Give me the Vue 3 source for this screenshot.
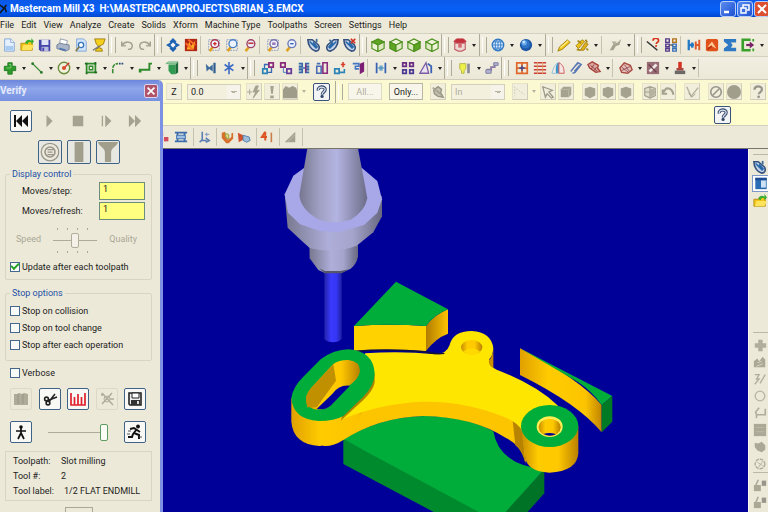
<script setup>
import { ref } from 'vue'

const movesStep = ref('1')
const movesRefresh = ref('1')
const coordinate = ref('0.0')
const quality = ref(50)
const speed = ref(100)
const updateEach = ref(true)
const verbose = ref(false)

const stops = ref([
  { label: 'Stop on collision', on: false },
  { label: 'Stop on tool change', on: false },
  { label: 'Stop after each operation', on: false },
])

const menus = ['File', 'Edit', 'View', 'Analyze', 'Create', 'Solids', 'Xform', 'Machine Type', 'Toolpaths', 'Screen', 'Settings', 'Help']

const lens = (extra, ring) =>
  `<path d="M3 15l4-5" stroke="#e0a020" stroke-width="3"/><circle cx="9" cy="6.500" r="4.500" fill="#eef4ff" stroke="${ring}" stroke-width="1.600"/>${extra}`
const frame = '<path d="M2 2h12v12H2z" fill="#f6f2dc" stroke="#7f8fc0" stroke-dasharray="2 1"/>'
const cube = (top, left, right) =>
  `<g stroke="#4c8f1c" stroke-width="1.300"><path d="M1 4.500L8 1l7 3.500L8 8z" fill="${top}"/><path d="M1 4.500L8 8v7.500L1 12z" fill="${left}"/><path d="M15 4.500L8 8v7.500l7-3.500z" fill="${right}"/></g>`
const solid = '<path d="M2 5l3-3h9v9l-3 3H2z" fill="#a5a28f"/><path d="M2 5h9v9M11 5l3-3" stroke="#bdbaa8" fill="none"/>'
const swoosh = (accent) =>
  `<path d="M1 2c0 6 4 12 9 13 4 0 5-4 3-7L6 2z" fill="#c5d4ea" stroke="#35507c" stroke-width="1.800"/><path d="M3 4l8 8M7 5l5 6" stroke="#2868a8" stroke-width="2"/>${accent}`
const question = (color) =>
  `<path d="M4 5.500C4 .5 12.500.5 12.500 5c0 3-3.500 3-3.500 5.500" fill="none" stroke="${color}" stroke-width="2.600"/><circle cx="8.700" cy="13.500" r="1.600" fill="${color}"/>`
const blocks = (a, b) =>
  `<path d="M2 9h5v5H2z" fill="none" stroke="${a}" stroke-width="2"/><path d="M9 2h5v5H9z" fill="none" stroke="${b}" stroke-width="2"/>`

const art = {
  file: '<path d="M3 1h7l4 4v10H3z" fill="#e6f1ff" stroke="#7da2d4"/><path d="M4 9h9v5H4z" fill="#a9cbf2"/><path d="M10 1v4h4" fill="#fff" stroke="#7da2d4"/>',
  open: '<path d="M1 6h5l1-2h7v10H1z" fill="#f2c518" stroke="#b38c10"/><path d="M4 8h12l-3 6H2z" fill="#ffe35a"/><path d="M6 6c1-4 4-5 7-3V0l3 4-3 3V5c-3-1-4 0-4 2z" fill="#3cae32"/>',
  save: '<path d="M1 2h13v13H3l-2-2z" fill="#4544a8"/><path d="M4 2h8v6H4z" fill="#dfe3f5"/><path d="M4 10h8v5H4z" fill="#b8bddf"/><path d="M5 11h2v4H5z" fill="#4544a8"/>',
  print: '<path d="M5 1l8 2-1 5H4z" fill="#fff" stroke="#8896ad"/><path d="M1 8l3-2 11 2v5l-4 2-10-3z" fill="#aab6c8" stroke="#6c7a92"/><path d="M4 12l7 2" stroke="#4a71b0" stroke-width="2"/>',
  preview: '<path d="M3 1h8l3 3v11H3z" fill="#cfe3fa" stroke="#7da2d4"/><circle cx="8" cy="8" r="3" fill="#fff" stroke="#3874b8" stroke-width="1.500"/><path d="M6 10l-4 5" stroke="#8a7a50" stroke-width="2"/>',
  trophy: '<path d="M3 1h12l-2 6-4 2v3h2l1 3H4l1-3h2V9L5 7z" fill="#f5cf1d" stroke="#9a7a10"/><path d="M1 14l8-5" stroke="#777" stroke-width="1.500"/>',
  undo: '<path d="M2 4v5h5M3 8c3-5 11-4 11 1 0 3-3 4-5 4" fill="none" stroke="#a5a28f" stroke-width="1.700"/>',
  redo: '<path d="M14 4v5H9M13 8C10 3 2 4 2 9c0 3 3 4 5 4" fill="none" stroke="#a5a28f" stroke-width="1.700"/>',
  pan: '<path d="M8 0l4 4-1 1 5 3-5 3 1 1-4 4-4-4 1-1-5-3 5-3-1-1z" fill="#1e62b4"/><path d="M8 5l3 3-3 3-3-3z" fill="#f1f4f8"/>',
  repaint: '<path d="M1 1h14v14H1z" fill="#b02713"/><path d="M3 13l3-9 2 5 5-6-2 10z" fill="#ffae21"/><path d="M2 6l8 7M5 2l8 6" stroke="#ff6d2a" stroke-width="2"/>',
  zoomWin: frame + lens('<path d="M7 6.500h4M9 4.500v4" stroke="#d12626" stroke-width="1.500"/>', '#a83250'),
  zoomFit: frame + lens('', '#4a80c4'),
  zoomTarget: lens('<path d="M6 6h6" stroke="#c24040" stroke-width="2"/>', '#a04068'),
  zoomSel: frame + lens('<path d="M7 5h4v3H7z" fill="#9a7bb5"/>', '#7a6fae'),
  unzoom: lens('<path d="M7 6.500h4" stroke="#3a66b4" stroke-width="1.600"/>', '#6a78b8'),
  rotA: swoosh('<path d="M11 1v4" stroke="#3a6a9c" stroke-width="2"/>'),
  rotB: '<g transform="translate(16 0) scale(-1 1)">' + swoosh('<path d="M11 2L8 5" stroke="#3a6a9c" stroke-width="2"/>') + '</g>',
  rotC: swoosh('<path d="M9 1l5 5M14 1L9 6" stroke="#d03020" stroke-width="1.800"/>'),
  cubeTop: cube('#5ea524', '#eef3d8', '#dfe9c0'),
  cubeFront: cube('#eef3d8', '#5ea524', '#dfe9c0'),
  cubeSide: cube('#eef3d8', '#dfe9c0', '#5ea524'),
  cubeIso: cube('#eef3d8', '#dfe9c0', '#eef3d8'),
  planes: '<path d="M1 4l3-3h8l3 3-3 2H4z" fill="#c3303e" stroke="#c3303e"/><path d="M2 5l2 1h8l2-1v8l-4 2H6l-4-2z" fill="#ecd9d4" stroke="#c3606a" stroke-width="1.300"/><path d="M6 6h4v5H6z" fill="#d66870"/>',
  globe: '<circle cx="8" cy="8" r="6.500" fill="#d9ecff" stroke="#2f78c4" stroke-width="1.600"/><path d="M8 1.500v13M1.500 8h13M3 4.500h10M3 11.500h10" stroke="#2f78c4"/><ellipse cx="8" cy="8" rx="3.200" ry="6.500" fill="none" stroke="#2f78c4"/>',
  ball: '<circle cx="8" cy="8" r="7" fill="#1c56a4"/><circle cx="7.500" cy="7" r="5" fill="#2f74c4"/><circle cx="6" cy="5.500" r="3" fill="#68aaea"/><circle cx="5.500" cy="4.500" r="1.500" fill="#c8e4ff"/>',
  pencil: '<path d="M1 15l2-5 9-8 3 3-9 8z" fill="#f0c51c" stroke="#a07d14"/><path d="M4 11l9-8" stroke="#fff08a" stroke-width="1.500"/>',
  pencils: '<path d="M1 9l7-7 3 2-7 8z" fill="#f0c51c" stroke="#a07d14"/><path d="M6 14l6-9 3 2-5 7z" fill="#e2b21a" stroke="#a07d14"/><path d="M3 3l4 3M2 13l4 1M12 2l2 3M13 12l2 2" stroke="#a48414" stroke-width="2"/>',
  brush: '<path d="M2 14l4-7 5-2 4-4-2 7-4 1-3 5z" fill="#a5a28f"/><path d="M4 4h6l-3 4z" fill="#b0ad9b"/>',
  analyze: '<path d="M1 4l12 10" stroke="#333" stroke-width="1.800"/><g transform="translate(5 -1) scale(.75)">' + question('#d63418') + '</g>',
  opsList: '<g fill="none" stroke-width="1.600"><path d="M2 1h4v4H2zM2 7h4v3H2zM2 12h4v3H2z" stroke="#553a8c"/><path d="M10 1h4v4h-4z" stroke="#b07018"/><path d="M10 7h4v3h-4zM10 12h4v3h-4z" stroke="#3a72b8"/><path d="M7 8h3" stroke="#555"/></g>',
  swap: '<path d="M2 2v12M2 8h6M6 5v6" stroke="#2478c4" stroke-width="2.600"/><path d="M14 2v12M10 4v9M9 8h5" stroke="#e0582a" stroke-width="2.200"/>',
  orange: '<rect x="1" y="1" width="14" height="14" rx="2" fill="#e0521a"/><path d="M3 10l5-6 5 8-4-2z" fill="#ffc890"/><path d="M3 13l5-4" stroke="#b83410" stroke-width="2"/>',
  sigma: '<path d="M1 1h14v4H9l2 3-2 3h6v4H1v-3l5-4-5-4z" fill="#2e78c4"/>',
  export: '<path d="M11 2H2v12h9" fill="none" stroke="#3aa02c" stroke-width="3"/><path d="M6 8h6" stroke="#7a2468" stroke-width="2.500"/><path d="M10 4l5 4-5 4z" fill="#7a2468"/><path d="M14 1v3M14 12v3" stroke="#3aa02c" stroke-width="2"/>',
  plus: '<path d="M5.500 2h5v4h4v5h-4v4h-5v-4h-4V6h4z" fill="#2f9a2c" stroke="#1f7a20"/><path d="M7 4h2v4H4" fill="none" stroke="#7fd070"/>',
  line: '<path d="M3 3l10 10" stroke="#3b8a34" stroke-width="1.600"/><circle cx="3" cy="3" r="1.600" fill="#2d7a2c"/><circle cx="13" cy="13" r="1.600" fill="#2d7a2c"/>',
  arc: '<circle cx="8" cy="8" r="6.500" fill="#f0f2dc" stroke="#6c8c3c" stroke-width="1.600"/><path d="M8 8l6-6" stroke="#cf4030" stroke-width="1.600"/><circle cx="8" cy="8" r="2.400" fill="#d8502c"/>',
  rect: '<path d="M3 3h10v10H3z" fill="none" stroke="#2f8a2c" stroke-width="2"/><path d="M6 6h4v4H6z" fill="none" stroke="#2f8a2c" stroke-width="1.500"/><path d="M1 3h3M12 13h3M3 13v2M13 1v3" stroke="#1f6a20" stroke-width="2"/>',
  fillet: '<path d="M2 14V9c0-4 2-6 6-6" fill="none" stroke="#3b8a34" stroke-width="1.800" stroke-dasharray="5 1"/><path d="M9 3h6" stroke="#2c4a78" stroke-width="1.800" stroke-dasharray="2 1"/>',
  spline: '<path d="M2 13V10h11V3h3M1 12h3" fill="none" stroke="#2f8a2c" stroke-width="2.200"/>',
  block: '<path d="M1 3l3-2h11l-3 2z" fill="#a8dcb0" stroke="#6cae7c"/><path d="M4 4h8v11l-5 0-3-4z" fill="#2f9a50"/><path d="M12 4l3-3v12l-3 2z" fill="#1b6a38"/>',
  trim: '<path d="M2 3l4 4 4-3v8l-4-3-3 3z" fill="#3e6c9c"/><path d="M12 2v12" stroke="#2f5c90" stroke-width="2.500"/>',
  star: '<path d="M8 1v14M3 4l10 7M13 4L3 11" stroke="#3a6ac4" stroke-width="1.800"/>',
  xlate: blocks('#2c84b8', '#8a2c7c') + '<path d="M4 8V4h4M12 8v5H8" fill="none" stroke="#3b67b4" stroke-width="1.500"/>',
  xlate3: '<g transform="translate(16 0) scale(-1 1)">' + blocks('#6a3c9a', '#8a2c7c') + '</g><path d="M5 8v5h4" fill="none" stroke="#3a78c0"/>',
  mirror: '<path d="M2 3h4v3H2M14 3h-4v3h4M2 10h4v3H2M14 10h-4v3h4M8 8H2M14 8H8" fill="none" stroke="#3568a8" stroke-width="1.800"/><path d="M10 4v9" stroke="#8a2c7c" stroke-width="1.500"/>',
  rotate: '<path d="M2 6h5v8H2zM2 3h4" fill="none" stroke="#4a6cb4" stroke-width="1.800"/><path d="M9 2h5v12H9z" fill="none" stroke="#8a2c7c" stroke-width="1.800"/>',
  scale: '<path d="M2 9h5v5H2z" fill="none" stroke="#2c84b8" stroke-width="2"/><path d="M7 13h6V9" fill="none" stroke="#2c84b8" stroke-width="1.800"/><path d="M9 4h5M11.500 1v6" stroke="#d8402c" stroke-width="1.800"/>',
  offset: '<path d="M2 3h7v3H5v3h4" fill="none" stroke="#4478c4" stroke-width="1.800"/><path d="M10 3l5-2v11l-5 3z" fill="#7c1f74"/>',
  space: '<path d="M3 2v12M13 2v12" stroke="#3a62b4" stroke-width="2"/><path d="M4 8h8M7 5v6M9 5v6" stroke="#3a8ac0" stroke-width="1.300"/>',
  grid4: '<g fill="none" stroke-width="2"><path d="M2 2h4v4H2zM10 2h4v4h-4z" stroke="#6a2c84"/><path d="M2 10h4v4H2zM10 10h4v4h-4z" stroke="#4a3a94"/></g>',
  cone: '<path d="M1 14L8 2l3 12z" fill="#e9e3f2" stroke="#7a5ca4" stroke-width="1.500"/><path d="M10 3l4 3v8" stroke="#3a62b4" fill="none" stroke-width="2"/>',
  bulb: '<path d="M2 3h7v6l-2 2v3H4v-3L2 9z" fill="#eef04c" stroke="#b4b43c"/><path d="M12 3v11" stroke="#8a8a96" stroke-width="3"/>',
  steps: '<path d="M3 14v-4h4V7h4V3h4" fill="none" stroke="#8c7ca4" stroke-width="2.200"/><path d="M10 2h5v3h-5zM1 10h6v4H1z" fill="#b4b4d4" stroke="#7a7c9c"/>',
  gridRed: '<path d="M2 2h12v12H2zM8 2v12M1 8h14" fill="none" stroke="#e0682c" stroke-width="2"/><path d="M8 5v6M5 8h6" stroke="#3a4a94" stroke-width="1.500"/>',
  lines: '<path d="M1 2h14M1 6h14M1 10h14M1 14h14" stroke="#cc3c38" stroke-width="1.500"/><path d="M5 1v14M11 1v14" stroke="#e0a060"/>',
  dome: '<path d="M1 14C3 8 4 4 8 2v12z" fill="#f2ece4" stroke="#8cbcd8"/><path d="M8 2c-3 3-3 8-2 12h4V2z" fill="#3f96cc"/><path d="M9 2c5 2 6 7 6 12H9z" fill="#f4e4e4" stroke="#d05050"/>',
  clip: '<path d="M2 12l8-10 4 2-7 9-3 1M4 9l6-6M6 12l6-7" fill="none" stroke="#5a78b4" stroke-width="1.600"/>',
  surf: '<path d="M1 4l5-3 7 4-1 3 3 4-5 1-7-5z" fill="#dca8a0" stroke="#a8443c" stroke-width="1.600"/><path d="M4 5l8 7M8 4l-3 5M11 7l-3 4" stroke="#8c3c3c"/>',
  surf2: '<path d="M1 8l5-6 7 3 2 5-5 4-7-1z" fill="#e8bcb0" stroke="#a84c44" stroke-width="1.600"/><path d="M3 11l10-5M6 4l6 8M3 7l8 6" stroke="#8c4c5c"/>',
  mill: '<path d="M1 1h14v14H1z" fill="#986c74"/><path d="M4 12l8-8" stroke="#f0e8e8" stroke-width="3"/><path d="M3 4l9 9" stroke="#6a3c4c" stroke-width="1.500"/>',
  stamp: '<path d="M6 1h4v7H6z" fill="#d83020"/><path d="M4 8h8v3H4z" fill="#a44840"/><path d="M2 11h12v4H2z" fill="#6c6868"/>',
  flash: '<path d="M3 5v6M0 8h6M10 1L7 8h3l-3 7 7-9h-3l2-5z" fill="#a5a28f" stroke="#a5a28f"/>',
  bang: '<path d="M6 1h4l-1 9H7zM6 12h4v3H6z" fill="#a5a28f"/>',
  solidWide: '<path d="M0 5l3-4 4 2 4-2 4 2 1 3v9H0z" fill="#9f9c8a"/>',
  help: '<path d="M4 6C3 .5 13 .5 12.500 5c0 3-3.500 3-3.500 6" fill="none" stroke="#34486c" stroke-width="4"/><path d="M4 5.500C4 1 12.500 1 12.500 5c0 3-3.500 3-3.500 5.500" fill="none" stroke="#dce4f0" stroke-width="1.500"/><circle cx="8.700" cy="13.500" r="2" fill="#34486c"/>',
  helpGrey: question('#98958a'),
  wheel: '<path d="M3 6l5-4 4 3-1 4 3 5-6-1-4-3z" fill="#c2bfae" stroke="#9a9786" stroke-width="1.600"/><path d="M2 3l11 9" stroke="#a5a28f" stroke-width="2"/>',
  dash: '<path d="M1 2l12 9M2 5v8" stroke="#c9c6b4" stroke-dasharray="2 1.500" fill="none"/>',
  cursor: '<path d="M2 2l11 4-4 2 5 6-2 1-5-5-2 4z" fill="#efecdb" stroke="#9a9786" stroke-width="1.400"/>',
  solid,
  hex: '<path d="M2 4l6-2 6 2v8l-6 3-6-3z" fill="#a5a28f"/>',
  cubeHalf: '<path d="M2 4l6-2 6 2v8l-6 3-6-3zM8 2v13M2 8h12" fill="#e0ddcb" stroke="#a5a28f" stroke-width="1.400"/><path d="M8 5l5-1v7l-5 3z" fill="#b5b2a0"/>',
  bend: '<path d="M2 9l4-5c5-1 8 3 8 7M2 5v5h5" fill="none" stroke="#a5a28f" stroke-width="2.400"/>',
  check: '<path d="M2 2l5 11 8-10" fill="none" stroke="#b5b2a0" stroke-width="1.600"/><path d="M4 9l4 5 4-4" fill="none" stroke="#a5a28f"/>',
  ban: '<circle cx="8" cy="8" r="6" fill="none" stroke="#98958a" stroke-width="1.800"/><path d="M4 12l8-8" stroke="#98958a" stroke-width="1.800"/>',
  disc: '<circle cx="8" cy="8" r="8" fill="#a19e8c"/>',
  dots: '<path d="M3 3h4v4H3z" fill="#c33"/><path d="M8 8h5v5H8z" fill="#d44a5c"/><path d="M4 11h3" stroke="#247" stroke-width="2"/>',
  layers: '<path d="M1 3h14M1 13h14M4 3v10M12 3v10" stroke="#3a6cae" stroke-width="2"/><path d="M3 6h10v4H3z" fill="#9cc0e4" stroke="#3a6cae"/>',
  axis: '<path d="M6 2v10h5M3 14l3-3M10 9l4 3-4 2" fill="none" stroke="#5a7eb4" stroke-width="1.800"/><path d="M11 3v4M9 5h5" stroke="#8ca4cc" stroke-width="1.500"/>',
  shieldA: '<path d="M2 3l4-1v5l3 4 4-3V4l2-1v7l-5 5H7L2 9z" fill="#d6702c"/><path d="M6 4l4 1v5l-3-1z" fill="#e6d680" stroke="#8c9c3c"/>',
  shieldB: '<path d="M1 3l6 3v5l-5 3z" fill="#d0502c"/><path d="M7 6l7 2 1 4-4 2-4-2z" fill="#9cbcd8" stroke="#4c7cac"/>',
  four: '<path d="M6 2L2 8h6M6 2v10" fill="none" stroke="#dc5424" stroke-width="2.200"/><path d="M13 3v11" stroke="#c87c4c" stroke-width="1.800"/>',
  ramp: '<path d="M2 14L14 2v12z" fill="#a5a28f"/><path d="M5 14L14 5" stroke="#c2bfae"/>',
  panel: '<path d="M1 1h14v14H1z" fill="#2c6cb4"/><path d="M8 4h6v9H8z" fill="#cfe2f4"/><path d="M1 1h14v3H1z" fill="#1c4c94"/>',
  plusGrey: '<path d="M6 2h5v4h4v5h-4v4H6v-4H2V6h4z" fill="#b0ad9b"/>',
  peaks: '<path d="M1 14V7l4-3 2 3 4-5 3 3v9z" fill="#aba896"/><path d="M5 9l5-2M4 13l7-3" stroke="#dedbc9"/>',
  slash: '<path d="M2 3h5l-3 5h3l-5 6M8 13l6-10" fill="none" stroke="#b0ad9b" stroke-width="1.500"/>',
  ring: '<circle cx="8" cy="8" r="5.500" fill="none" stroke="#b8b5a3" stroke-width="1.500"/>',
  hook: '<path d="M7 2L3 7l1 3h10V3M4 10v4" fill="none" stroke="#b0ad9b" stroke-width="1.800"/>',
  tile: '<path d="M1 1h14v14H1z" fill="#aba896"/><path d="M3 5h10M3 10h10" stroke="#bdbaa8"/>',
  blob: '<path d="M2 3l4 1 4-2 4 4v5l-4 3-5-2-3-4z" fill="#aba896"/>',
  gear: '<circle cx="8" cy="8" r="5.500" fill="none" stroke="#b0ad9b" stroke-width="1.600" stroke-dasharray="4 1"/><path d="M5 6l6 4M11 5l-5 7" stroke="#b0ad9b"/>',
  pair: '<path d="M1 8h8v7H1z" fill="#aba896"/><path d="M10 3h5v6h-5z" fill="#98958a"/><path d="M3 9l3-7" stroke="#b0ad9b" stroke-width="2"/>',
  rewind: '<path d="M1 2h2v12H1zM9 2v12L3 8zM15 2v12L9 8z" fill="#111"/>',
  play: '<path d="M4 1l7 7-7 7z" fill="#a5a28f"/>',
  stop: '<path d="M2 2h12v12H2z" fill="#a5a28f"/>',
  step: '<path d="M2 2h1.500v12H2zM6 1l7 7-7 7z" fill="#a5a28f"/>',
  forward: '<path d="M1 1l7 7-7 7zM8 1l7 7-7 7z" fill="#a5a28f"/>',
  target: '<circle cx="8" cy="8" r="7" fill="#edeadb" stroke="#98958a"/><circle cx="8" cy="8" r="4" fill="none" stroke="#98958a" stroke-width="1.300"/><path d="M6 6h5M6 8h4M6 10h5" stroke="#98958a"/>',
  bar: '<path d="M4.500 0h7v16h-7z" fill="#a19e8c"/>',
  funnel: '<path d="M0 0h16c-1 4-5 4-5.500 8v8h-5V8C5 4 1 4 0 0z" fill="#a19e8c"/>',
  bricks: '<path d="M1 3h3l2-1 3 1 2-1 4 1v11H1z" fill="#aeab99"/><path d="M5 3v10M10 3v10" stroke="#98958a"/>',
  shears: '<path d="M9 8l4-5M7 9l8-3" stroke="#222" stroke-width="1.500"/><circle cx="6" cy="12" r="1.900" fill="none" stroke="#222" stroke-width="1.600"/><circle cx="4.500" cy="8" r="1.900" fill="none" stroke="#222" stroke-width="1.600"/><path d="M6 9l4-1-3 4" fill="#222"/>',
  ruler: '<path d="M1 2v12h14V2M4.500 6v8M8 3v11M11.500 6v8" fill="none" stroke="#e0202c" stroke-width="1.700"/>',
  section: '<path d="M3 2l11 12M13 2L3 13M3 2v3M11 8h4" fill="none" stroke="#b0ad9b" stroke-width="1.500"/><circle cx="8" cy="8" r="3" fill="none" stroke="#b0ad9b"/>',
  disk: '<path d="M2 2h12v12H3l-1-1z" fill="#eee" stroke="#222" stroke-width="1.600"/><path d="M5 2h7v5H5z" fill="#fff" stroke="#222"/><path d="M4 9h9v5H4z" fill="#333"/><path d="M10 10h2v3h-2z" fill="#ddd"/>',
  walk: '<circle cx="8" cy="3" r="1.800" fill="#111"/><path d="M3 7h10M8 4v6M8 9l-3 6M8 9l3 6" fill="none" stroke="#111" stroke-width="1.700"/>',
  run: '<circle cx="11" cy="2.500" r="1.900" fill="#111"/><path d="M10 5l-4 5M3 5l4-1 6 4M7 9l5 2v4M6 10l-1 3H1" fill="none" stroke="#111" stroke-width="2"/><path d="M1 7h3M0 10h3M12 13h3" stroke="#555"/>',
}

// Toolbar rows: "|" is a thin divider, "#" a gripped toolbar edge, "v" a drop-down arrow.
const split = (text) => text.split(' ')
const mainBar = split('file open save print preview trophy # undo redo # pan repaint | zoomWin zoomFit zoomTarget | zoomSel unzoom | rotA rotB rotC # cubeTop cubeFront cubeSide cubeIso # planes v # globe v ball v # pencil pencils v | brush v # analyze opsList | swap orange sigma export v')
const sketchBar = split('plus v line v arc v rect v fillet v spline v block v # trim star v # xlate xlate3 mirror rotate scale offset | space v grid4 cone v # bulb v steps # gridRed lines dome clip surf v | surf2 v mill v stamp v')
const verifyBar = split('dots layers | axis | shieldA shieldB | four | ramp')
const pickA = split('dash v cursor solid')
const pickB = split('hex hex hex')
const pickC = split('cubeHalf bend')
const sideTop = split('rotA panel open')
const sideBottom = split('plusGrey peaks slash ring hook tile blob gear | pair pair')

const transport = ['rewind', 'play', 'stop', 'step', 'forward']
const shading = ['target', 'bar', 'funnel']
const actions = ['bricks', 'shears', 'ruler', 'section', 'disk']
const isMark = (name) => name === '|' || name === '#'
</script>

<template>
  <div class="app">
    <header class="titlebar">
      <svg class="logo" viewBox="0 0 10 14"><path d="M0 2l5 4 3-4M0 12l6-7 2 6" fill="none" stroke="#101820" stroke-width="2" /></svg>
      <h1>Mastercam Mill X3&nbsp; H:\MASTERCAM\PROJECTS\BRIAN_3.EMCX</h1>
      <div class="winbuttons">
        <button aria-label="Minimize"><svg viewBox="0 0 14 14"><path d="M3 10h5" stroke="#fff" stroke-width="2.500" /></svg></button>
        <button aria-label="Restore"><svg viewBox="0 0 14 14"><path d="M5 6V3h6v5H9M3 6h5v5H3z" fill="none" stroke="#fff" stroke-width="1.500" /></svg></button>
        <button class="close" aria-label="Close"><svg viewBox="0 0 14 14"><path d="M3 3l8 8M11 3l-8 8" stroke="#fff" stroke-width="2" /></svg></button>
      </div>
    </header>

    <nav class="menu">
      <button v-for="m in menus" :key="m">{{ m }}</button>
    </nav>

    <div class="toolbar">
      <template v-for="(name, i) in mainBar" :key="i">
        <span v-if="isMark(name)" :class="name === '|' ? 'divider' : 'grip'"></span>
        <button v-else-if="name === 'v'" class="drop" aria-label="More"></button>
        <button v-else class="tool" :aria-label="name"><svg viewBox="0 0 16 16" v-html="art[name]"></svg></button>
      </template>
    </div>

    <div class="toolbar sketch">
      <template v-for="(name, i) in sketchBar" :key="i">
        <span v-if="isMark(name)" :class="name === '|' ? 'divider' : 'grip'"></span>
        <button v-else-if="name === 'v'" class="drop" aria-label="More"></button>
        <button v-else class="tool" :aria-label="name"><svg viewBox="0 0 16 16" v-html="art[name]"></svg></button>
      </template>
      <span class="divider"></span>
    </div>

    <div class="ribbon">
      <button class="chip axis">Z</button>
      <select v-model="coordinate" class="combo" aria-label="Coordinate"><option>0.0</option></select>
      <div class="cluster">
        <button class="chip" aria-label="Fast point"><svg viewBox="0 0 16 16" v-html="art.flash"></svg></button>
        <button class="chip" aria-label="Alert"><svg viewBox="0 0 16 16" v-html="art.bang"></svg></button>
        <button class="chip" aria-label="Solid"><svg viewBox="0 0 16 16" v-html="art.solidWide"></svg></button>
        <button class="drop faint" aria-label="More"></button>
      </div>
      <button class="helpbtn" aria-label="Help"><svg viewBox="0 0 16 16" v-html="art.help"></svg></button>
      <span class="grip"></span>
      <button class="word" disabled>All...</button>
      <button class="word">Only...</button>
      <button class="chip" aria-label="Options"><svg viewBox="0 0 16 16" v-html="art.wheel"></svg></button>
      <select class="combo" disabled aria-label="Range"><option>In</option></select>
      <div class="picks">
        <div class="cluster">
          <template v-for="(name, i) in pickA" :key="i">
            <button v-if="name === 'v'" class="drop faint" aria-label="More"></button>
            <button v-else class="chip" :aria-label="name"><svg viewBox="0 0 16 16" v-html="art[name]"></svg></button>
          </template>
        </div>
        <div class="cluster">
          <button v-for="(name, i) in pickB" :key="i" class="chip" :aria-label="name"><svg viewBox="0 0 16 16" v-html="art[name]"></svg></button>
        </div>
        <div class="cluster">
          <button v-for="name in pickC" :key="name" class="chip" :aria-label="name"><svg viewBox="0 0 16 16" v-html="art[name]"></svg></button>
        </div>
        <button class="chip" aria-label="Validate"><svg viewBox="0 0 16 16" v-html="art.check"></svg></button>
        <div class="cluster">
          <button class="chip" aria-label="Cancel"><svg viewBox="0 0 16 16" v-html="art.ban"></svg></button>
          <button class="chip" aria-label="Apply"><svg viewBox="0 0 16 16" v-html="art.disc"></svg></button>
        </div>
        <button class="chip" aria-label="Info"><svg viewBox="0 0 16 16" v-html="art.helpGrey"></svg></button>
      </div>
    </div>

    <div class="prompt">
      <button class="helpbtn" aria-label="Help"><svg viewBox="0 0 16 16" v-html="art.help"></svg></button>
    </div>

    <div class="toolbar verify-tools">
      <template v-for="(name, i) in verifyBar" :key="i">
        <span v-if="isMark(name)" class="divider"></span>
        <button v-else class="tool" :aria-label="name"><svg viewBox="0 0 16 16" v-html="art[name]"></svg></button>
      </template>
      <span class="divider"></span>
    </div>

    <main class="work">
      <svg class="scene" viewBox="0 149 748 363" preserveAspectRatio="xMinYMin slice">
        <defs>
          <linearGradient id="steel"><stop offset="0" stop-color="#777790" /><stop offset=".3" stop-color="#a0a0c4" /><stop offset=".55" stop-color="#b4b4e2" /><stop offset="1" stop-color="#6c6c88" /></linearGradient>
          <linearGradient id="collar"><stop offset="0" stop-color="#77778e" /><stop offset=".45" stop-color="#aeaeda" /><stop offset=".7" stop-color="#a4a4cc" /><stop offset="1" stop-color="#686880" /></linearGradient>
          <linearGradient id="shank"><stop offset="0" stop-color="#2222a8" /><stop offset=".4" stop-color="#3a3aff" /><stop offset=".7" stop-color="#3535f4" /><stop offset="1" stop-color="#2020a0" /></linearGradient>
          <linearGradient id="gold"><stop offset="0" stop-color="#c88c00" /><stop offset=".3" stop-color="#ffcc00" /><stop offset=".65" stop-color="#ffc800" /><stop offset="1" stop-color="#b88000" /></linearGradient>
          <linearGradient id="goldside"><stop offset="0" stop-color="#b07c00" /><stop offset="1" stop-color="#ffc400" /></linearGradient>
          <linearGradient id="rim"><stop offset="0" stop-color="#e0a000" /><stop offset=".35" stop-color="#ffcc00" /><stop offset=".8" stop-color="#fcc400" /><stop offset="1" stop-color="#c08400" /></linearGradient>
        </defs>

        <!-- tool holder and cutter -->
        <g transform="translate(270 145) scale(.33333)">
          <path d="M163 375h52v207q-10 10-26 10t-26-10z" fill="url(#shank)" />
          <path d="M118 290h146v45q-4 22-22 36l-27 12h-52l-18-8-26-35z" fill="url(#collar)" />
          <path d="M148 370l15 15h52l22-12-25 5h-48z" fill="#55556c" />
          <path d="M44 148l9 100 45 42 22 20q72 18 140-8l50-40 26-48v-60z" fill="url(#collar)" />
          <path d="M44 148l26-56 33-24h172l47 40 14 55-14 40-40 37-77 22-55-4-60-20-36-35z" fill="#a8a8e8" />
          <path d="M112 10h152l28 150q-8 40-50 64-50 16-95 0-55-30-59-74z" fill="url(#steel)" />
        </g>

        <g transform="translate(280 270) scale(.33333)">
          <!-- stock offcuts -->
          <path d="M222 168q108-8 216 0v75q-108-8-216 0z" fill="#ffd200" />
          <path d="M438 168q25-34 66-50v73q-38 14-66 52z" fill="url(#goldside)" />
          <path d="M348 35l156 83q-41 16-66 50-108-8-216 0z" fill="#00ad3a" />
          <path d="M720 235q178 92 245 170v82Q895 402 720 315z" fill="url(#rim)" />
          <path d="M720 235l277 143-32 27q-30-42-70-68z" fill="#00ad3a" />
          <path d="M965 405l32-27v77l-32 32z" fill="#007a24" />
          <path d="M190 508v74l275 146h220l-80-10z" fill="#008a2e" />
          <path d="M793 598v72l-52 58H672z" fill="#007326" />
          <path d="M190 508q110-68 245-70 120 0 205 46 16 100 153 114L675 728h-75z" fill="#00ad3a" />

          <!-- bracket -->
          <path d="M130 450q130-60 300-60 140 0 300 70l8 120q-14-55-60-76-100-64-248-66-134 4-240 72-30 20-60 18z" fill="#fdc500" />
          <path d="M726 468l10 112q-10-40-30-54l-8-74z" fill="#b88400" />
          <path d="M34 385v70q6 68 84 73 60-4 90-34l76-130v-54z" fill="url(#rim)" />
          <path d="M255 250q110-8 210 3 34 0 44-28 10-42 66-42 60 4 65 52-2 24-12 32 0 22 22 32 120 46 184 108l-108 76q-8-22-44-38-120-52-252-50-126 4-250 55l70-80z" fill="#ffe600" />
          <path d="M640 232v62q-12-4-14-20 14-18 14-42z" fill="#c89000" />
          <path d="M222 244q108-9 216 2 30 8 55 4" fill="none" stroke="#10103c" stroke-width="4" />
          <ellipse cx="575" cy="232" rx="32" ry="22" fill="url(#gold)" />
          <path d="M550 245q25-20 50 0-25 18-50 0z" fill="#ffd900" />

          <!-- slotted boss -->
          <path d="M284 310v28q-4 22-34 52l-68 62 8-24z" fill="#ad8400" />
          <path d="M122 268q40-30 84-30 74 6 78 72 0 36-34 70l-60 58q-26 15-74 15-76-4-82-68 4-34 36-65z" fill="#00ad3a" />
          <path d="M160 282q18-13 46-12 34 4 34 34-4 24-34 44l-56 60q-18 15-50 9-22-8-22-32 2-16 16-32z" fill="url(#gold)" />
          <path d="M160 282l8 50-58 80-28 0q-4-10-4-27 2-16 16-32z" fill="#c09000" />
          <path d="M210 347q-34-4-54 26l-46 44q26 4 42-10z" fill="#000099" />

          <!-- round boss -->
          <path d="M723 468l12 90q4 46 73 50 84-4 87-58v-82z" fill="url(#gold)" />
          <ellipse cx="809" cy="468" rx="86" ry="63" fill="#00ad3a" />
          <ellipse cx="809" cy="470" rx="39" ry="31" fill="#ffee55" />
          <ellipse cx="809" cy="472" rx="33" ry="26" fill="url(#gold)" />
          <path d="M790 492q19-7 38 1-19 9-38-1z" fill="#000099" />
        </g>
      </svg>

      <aside class="sidebar">
        <span class="rule"></span>
        <button v-for="name in sideTop" :key="name" class="tool" :class="{ pressed: name === 'panel' }" :aria-label="name"><svg viewBox="0 0 16 16" v-html="art[name]"></svg></button>
        <span class="spacer"></span>
        <span class="rule"></span>
        <template v-for="(name, i) in sideBottom" :key="i">
          <span v-if="name === '|'" class="rule"></span>
          <button v-else class="tool" :aria-label="name"><svg viewBox="0 0 16 16" v-html="art[name]"></svg></button>
        </template>
      </aside>
    </main>

    <section class="dialog" aria-label="Verify">
      <header>
        <h2>Verify</h2>
        <button aria-label="Close"><svg viewBox="0 0 14 14"><path d="M3 3l8 8M11 3l-8 8" stroke="#fff" stroke-width="2" /></svg></button>
      </header>
      <div class="body">
        <div class="spread">
          <button v-for="name in transport" :key="name" class="key" :class="{ flat: name !== 'rewind' }" :aria-label="name"><svg viewBox="0 0 16 16" v-html="art[name]"></svg></button>
        </div>
        <div class="modes">
          <button v-for="name in shading" :key="name" class="key" :aria-label="name"><svg viewBox="0 0 16 16" v-html="art[name]"></svg></button>
        </div>

        <fieldset class="display">
          <legend>Display control</legend>
          <label class="field"><span>Moves/step:</span><input v-model="movesStep" type="text" /></label>
          <label class="field"><span>Moves/refresh:</span><input v-model="movesRefresh" type="text" /></label>
          <div class="quality">
            <span>Speed</span>
            <div class="ticked">
              <input v-model="quality" type="range" disabled aria-label="Speed to quality" />
            </div>
            <span>Quality</span>
          </div>
          <label class="tick"><input v-model="updateEach" type="checkbox" />Update after each toolpath</label>
        </fieldset>

        <fieldset class="stops">
          <legend>Stop options</legend>
          <label v-for="s in stops" :key="s.label" class="tick"><input v-model="s.on" type="checkbox" />{{ s.label }}</label>
        </fieldset>

        <label class="tick verbose"><input v-model="verbose" type="checkbox" />Verbose</label>

        <div class="spread">
          <button v-for="name in actions" :key="name" class="key" :class="{ ghost: name === 'bricks' || name === 'section' }" :aria-label="name"><svg viewBox="0 0 16 16" v-html="art[name]"></svg></button>
        </div>
        <div class="spread pace">
          <button class="key" aria-label="Slower"><svg viewBox="0 0 16 16" v-html="art.walk"></svg></button>
          <input v-model="speed" class="speed" type="range" aria-label="Simulation speed" />
          <button class="key" aria-label="Faster"><svg viewBox="0 0 16 16" v-html="art.run"></svg></button>
        </div>

        <dl class="info">
          <dt>Toolpath:</dt><dd>Slot milling</dd>
          <dt>Tool #:</dt><dd>2</dd>
          <dt>Tool label:</dt><dd class="name">1/2 FLAT ENDMILL</dd>
        </dl>
        <button class="more" aria-label="More"><svg viewBox="0 0 26 6"><path d="M3 4h20" stroke="#77746a" stroke-width="2" stroke-dasharray="3 2" /></svg></button>
      </div>
    </section>
  </div>
</template>

<style>
body { background: #ece9d8; }
</style>

<style scoped>
* { box-sizing: border-box; }
.app {
  position: relative;
  display: flex;
  flex-direction: column;
  height: 100vh;
  overflow: hidden;
  background: #ece9d8;
  color: #1c1c1c;
  font: 9px/12px Roboto, "Liberation Sans", sans-serif;
}
button, input, select { font: inherit; color: inherit; margin: 0; padding: 0; }
button { border: 0; background: none; flex: none; }
svg { display: block; }
h1, h2, dl, dd, fieldset { margin: 0; }

.titlebar {
  flex: none;
  display: flex;
  align-items: center;
  height: 17px;
  background: linear-gradient(#0a58e8, #0760f8 60%, #0048d0);
}
.logo { width: 8px; height: 12px; margin-right: 2px; }
h1 {
  flex: 1;
  color: #fff;
  font: bold 10px/15px Roboto, sans-serif;
  white-space: nowrap;
}
.winbuttons { display: flex; gap: 1px; margin-right: -2px; }
.winbuttons button {
  width: 16px;
  height: 16px;
  border: 1px solid #b8cdf8;
  border-radius: 3px;
  background: linear-gradient(135deg, #5a8cf0, #1e50d0);
}
.winbuttons .close { background: #dc5030; }

.menu { flex: none; display: flex; gap: 7px; height: 16px; align-items: center; }
.menu button { line-height: 14px; }

.toolbar {
  flex: none;
  display: flex;
  align-items: center;
  height: 23px;
  border-top: 1px solid #d4d0c0;
  background: linear-gradient(#f2efe2, #ebe8d7);
}
.sketch { padding-left: 1px; }
.tool { width: 18px; height: 18px; padding: 2px; }
.tool svg { width: 14px; height: 14px; }
.drop { width: 10px; height: 18px; display: flex; align-items: center; justify-content: center; }
.sketch .drop { width: 9px; }
.drop::before { content: ""; border: 2px solid transparent; border-top: 3px solid #222; border-bottom: 0; }
.drop.faint { width: 8px; }
.drop.faint::before { border-top-color: #b5b2a0; }
.divider { flex: none; width: 5px; height: 18px; border-left: 1px solid #c6c2b0; margin: 0; }
.grip { flex: none; width: 10px; height: 22px; border-left: 1px solid #aeab9a; display: flex; align-items: center; }
.sketch .grip { width: 12px; }
.grip::after { content: ""; width: 3px; height: 16px; margin-left: 2px; border-right: 1px solid #aeab9a; border-left: 1px solid #fff; }

.ribbon {
  flex: none;
  display: flex;
  align-items: center;
  gap: 5px;
  height: 24px;
  padding: 0 2px 0 166px;
  border-top: 1px solid #cfcbb8;
  background: #fbf9d2;
}
.ribbon .grip { width: 8px; }
.picks { flex: 1; display: flex; align-items: center; justify-content: space-between; margin-left: 2px; }
.cluster { display: flex; gap: 2px; flex: none; }
.chip {
  width: 16px;
  height: 17px;
  padding: 1px 0;
  border: 1px solid #e6e2c8;
  border-right-color: #cfccb8;
  border-bottom-color: #cfccb8;
  background: #f1eedc;
}
.chip svg { width: 14px; height: 14px; }
.combo {
  appearance: none;
  flex: none;
  width: 54px;
  height: 16px;
  padding-left: 3px;
  border: 1px solid #d2cfbc;
  border-radius: 0;
  background:
    linear-gradient(45deg, transparent 50%, #b8b5a4 50%) 43px 6px / 3px 3px no-repeat,
    linear-gradient(-45deg, transparent 50%, #b8b5a4 50%) 46px 6px / 3px 3px no-repeat,
    linear-gradient(#f6f4ea, #f6f4ea) 100% 0 / 13px 100% no-repeat,
    #f3f0de;
}
.combo:disabled { color: #b0ad9b; opacity: 1; }
.helpbtn {
  width: 17px;
  height: 18px;
  padding: 1px;
  border: 1px solid #3c547c;
  border-radius: 2px;
  background: #f2f4f6;
}
.helpbtn svg { width: 13px; height: 14px; }
.word { width: 34px; height: 17px; margin-right: 2px; border: 1px solid #b8b5a4; background: #f8f6ea; }
.word:disabled { color: #b0ad9b; border-color: #dddac6; }

.prompt {
  flex: none;
  display: flex;
  justify-content: flex-end;
  align-items: center;
  height: 22px;
  padding-right: 37px;
  border-top: 1px solid #e4e0b8;
  background: #ffffce;
}
.verify-tools { height: 24px; padding-left: 156px; border-bottom: 1px solid #77746a; background: #ece9d8; }
.verify-tools .tool { width: 17px; padding: 2px 1px; }
.verify-tools .divider { margin-left: 3px; width: 3px; }

.work { flex: 1; min-height: 0; display: flex; }
.scene { flex: 1; min-width: 0; height: 100%; background: #000099; }
.sidebar {
  flex: none;
  display: flex;
  flex-direction: column;
  align-items: center;
  width: 20px;
  padding: 5px 0 2px 4px;
  border-left: 1px solid #f8f6ee;
  overflow: hidden;
}
.sidebar .tool { height: 17px; padding: 1px; }
.sidebar .pressed { border: 1px solid #7c98c8; background: #fff; }
.sidebar .pressed svg { width: 14px; height: 13px; }
.rule { flex: none; width: 100%; height: 4px; border-top: 1px solid #bbb8a6; }
.spacer { flex: 1; }

.dialog {
  position: absolute;
  top: 80px;
  bottom: 0;
  left: 0;
  width: 163px;
  overflow: hidden;
  border-right: 3px solid #7c90e4;
  border-top-right-radius: 5px;
  background: #ece9d8;
}
.dialog header {
  display: flex;
  align-items: center;
  justify-content: space-between;
  height: 21px;
  padding-right: 2px;
  background: linear-gradient(#6c86dc, #8ea6ea 40%, #7690e0);
}
h2 { color: #e4eafc; font: bold 10px/14px Roboto, sans-serif; }
.dialog header button { width: 14px; height: 14px; border: 1px solid #dcd4ec; border-radius: 2px; background: #b0546c; }
.body { display: flex; flex-direction: column; padding: 9px 8px 0 5px; }
.spread { display: flex; justify-content: space-between; align-items: center; padding: 0 6px 0 5px; }
.key {
  width: 22px;
  height: 22px;
  padding: 2px;
  border: 1px solid #3f6288;
  border-radius: 2px;
  background: #f8f8f4;
}
.key svg { width: 16px; height: 16px; }
.key.flat { border-color: transparent; background: none; padding: 3px; }
.key.flat svg { width: 14px; height: 14px; }
.key.ghost { border-color: #dcd9c8; background: none; }
.modes { display: flex; gap: 5px; padding: 8px 0 4px 33px; }
.modes .key { width: 24px; height: 24px; padding: 1px; background: #e8e8e2; }
.modes svg { width: 20px; height: 20px; }

fieldset { border: 1px solid #d8d5c2; border-radius: 2px; padding: 0 5px; min-width: 0; }
legend { color: #2450a8; padding: 0 2px; line-height: 12px; }
.field { display: flex; align-items: center; justify-content: space-between; padding: 0 2px 0 12px; margin-bottom: 2px; }
.display .field:first-of-type { margin-top: 2px; }
.field input {
  width: 46px;
  height: 18px;
  padding: 0 0 4px 3px;
  border: 1px solid #6c8c7c;
  border-radius: 0;
  background: #ffff80;
}
.quality { display: flex; align-items: center; gap: 12px; color: #aaa796; padding: 0 10px 0 6px; margin: 8px 0 5px; }
.quality span { flex: none; padding-bottom: 4px; }
.ticked { flex: 1; padding: 5px 0; background:
  linear-gradient(90deg, #aaa796 1px, transparent 1px) 4px 0 / 10px 2px repeat-x,
  linear-gradient(90deg, #aaa796 1px, transparent 1px) 4px 100% / 10px 2px repeat-x; }
input[type="range"] {
  appearance: none;
  display: block;
  width: 100%;
  min-width: 0;
  height: 15px;
  background: linear-gradient(#aeab9a, #aeab9a) 0 50% / 100% 1px no-repeat;
}
input[type="range"]::-webkit-slider-thumb {
  appearance: none;
  width: 8px;
  height: 15px;
  border: 1px solid #b0ad9b;
  border-radius: 2px;
  background: #f4f2e8;
}
input.speed { flex: none; width: 60px; height: 17px; }
input.speed::-webkit-slider-thumb { height: 17px; border-color: #5c9c60; background: #fbfff8; }
.tick { display: flex; align-items: center; gap: 2px; height: 17px; white-space: nowrap; }
.tick input {
  appearance: none;
  flex: none;
  width: 10px;
  height: 10px;
  border: 1px solid #44688c;
  background: #f8faf8;
}
.tick input:checked { display: grid; place-items: center; }
.tick input:checked::before {
  content: "";
  width: 6px;
  height: 3px;
  border: solid #28a028;
  border-width: 0 0 2px 2px;
  transform: translateY(-1px) rotate(-45deg);
}
.display { padding: 0 4px 4px; }
.stops { margin-top: 7px; padding: 3px 4px 7px; }
.verbose { margin: 3px 5px 7px; }
.pace { margin-top: 11px; }
.info {
  display: grid;
  grid-template-columns: 48px 1fr;
  row-gap: 3px;
  margin-top: 8px;
  padding: 3px 0 3px 7px;
  border: 1px solid #d8d5c2;
  white-space: nowrap;
}
.name { padding-left: 3px; }
.more {
  align-self: center;
  width: 28px;
  height: 14px;
  margin-top: 6px;
  border: 1px solid #aaa796;
}
.more svg { width: 26px; height: 6px; }
</style>
